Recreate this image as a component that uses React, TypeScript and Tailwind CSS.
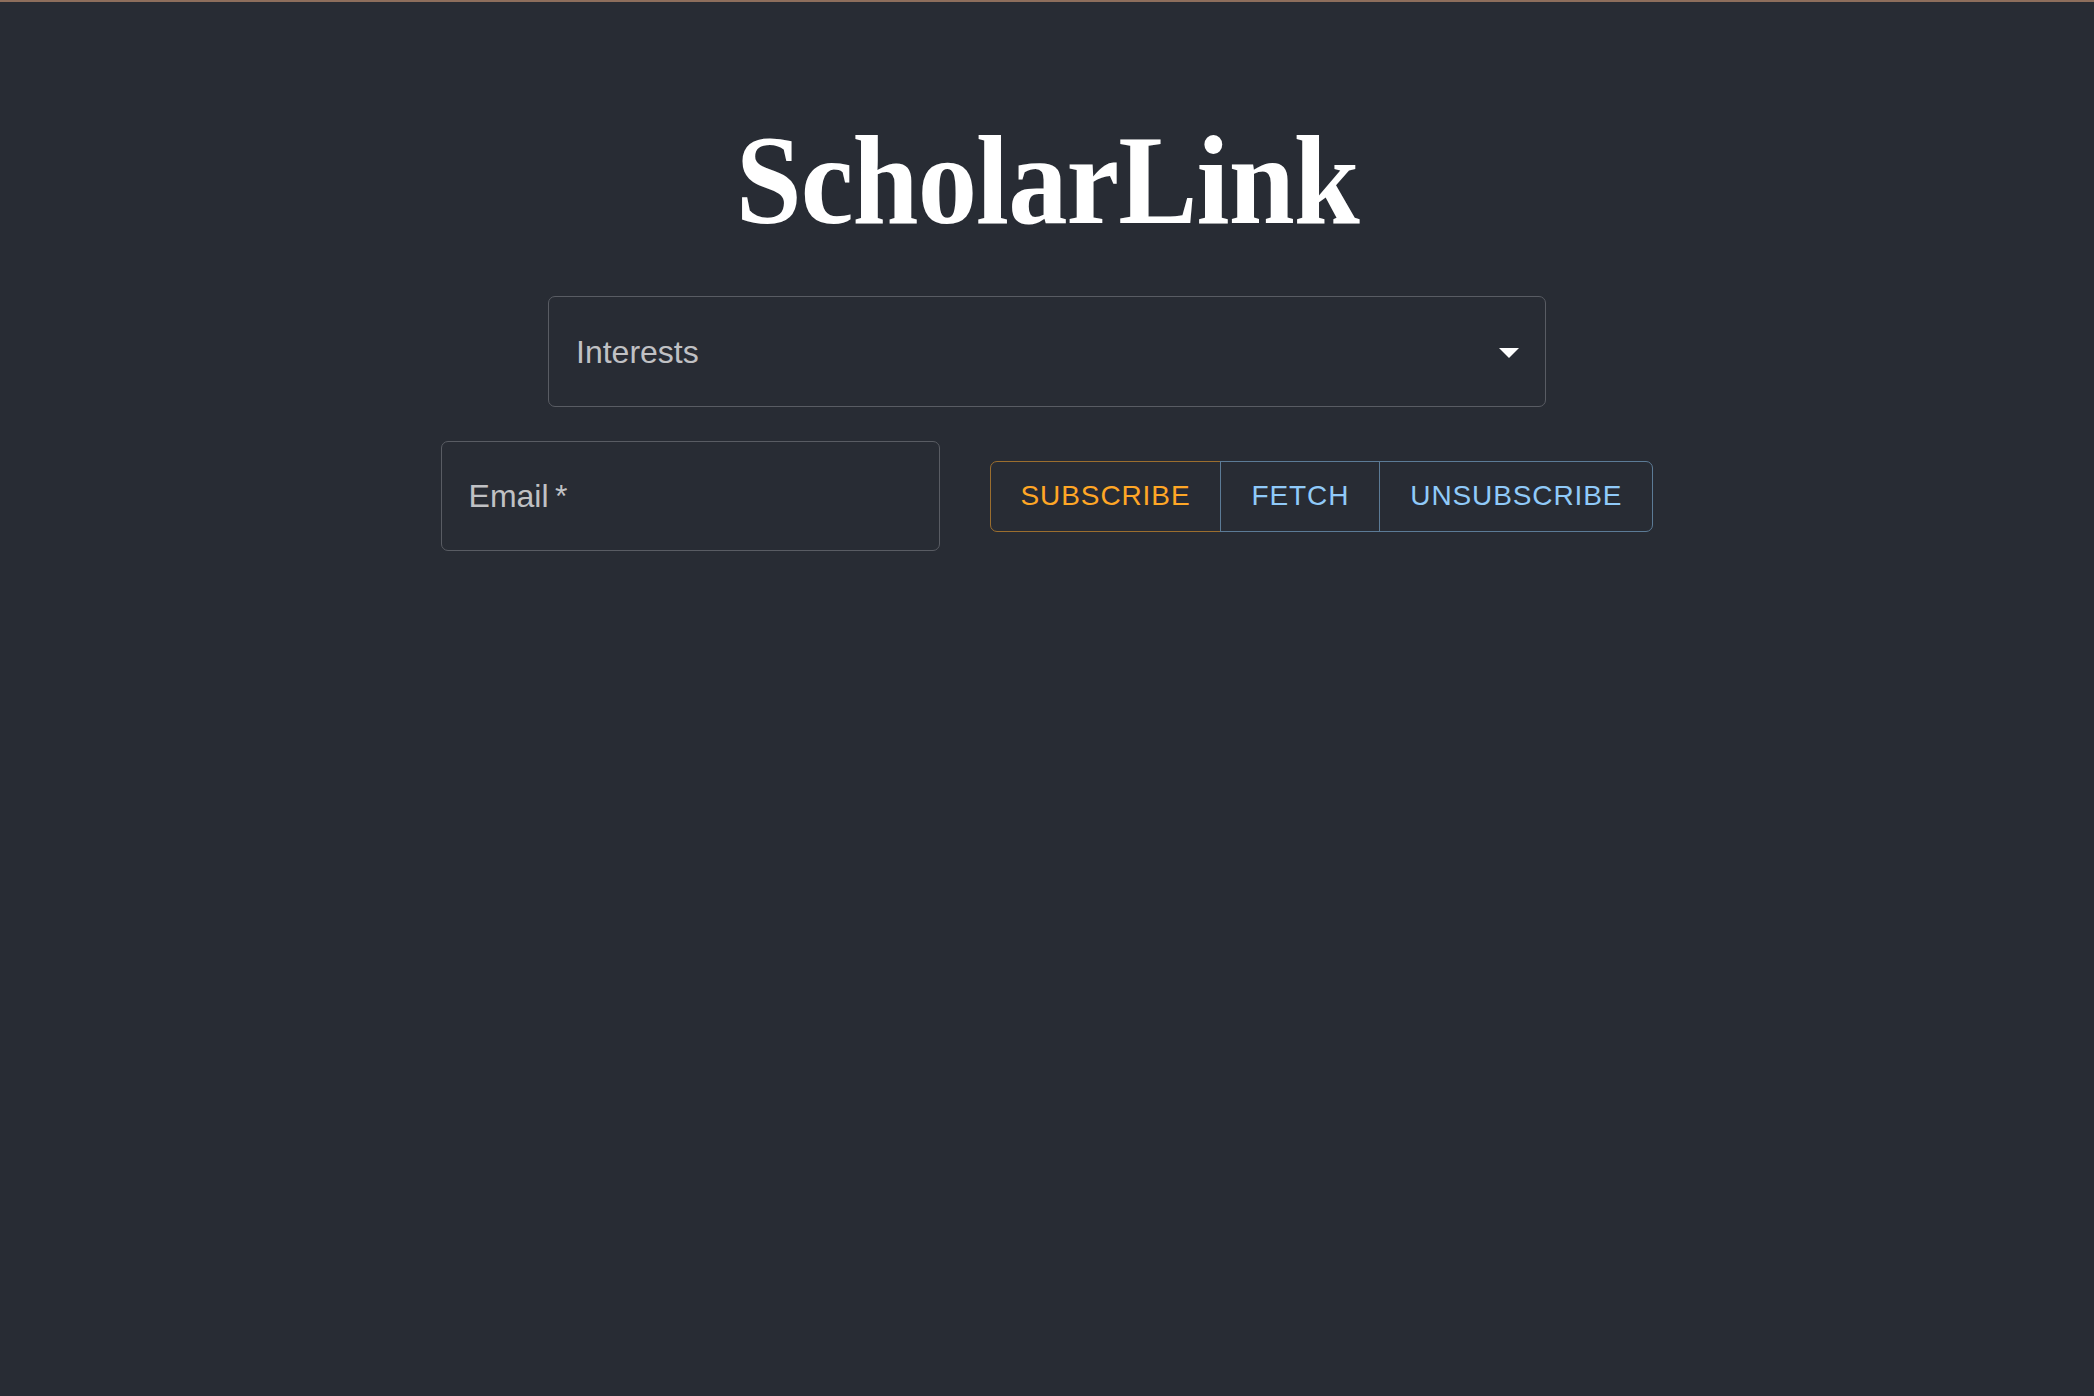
import React from "react";

const actions = [
  { label: "SUBSCRIBE", cls: "text-[#ffa726] border-[#9b6e2e] rounded-l-[7px]" },
  { label: "FETCH", cls: "text-[#90caf9] border-[#5c7b96] -ml-px" },
  { label: "UNSUBSCRIBE", cls: "text-[#90caf9] border-[#5c7b96] -ml-px rounded-r-[7px]" },
];

const App: React.FC = () => {
  return (
    <div className="min-h-screen bg-[#282c34] font-['Liberation_Sans',Arial,sans-serif]">
      <div className="h-[2px] bg-[#8d6e5c]" />

      <div className="flex flex-col items-center">
        <h1 className="mt-[115px] text-[127px] leading-none font-bold text-white font-['Liberation_Serif','Times_New_Roman',serif]">
          <span className="inline-block scale-x-[0.935] tracking-[-1px]">ScholarLink</span>
        </h1>

        {/* interests select */}
        <div className="mt-[52px] w-[998px] h-[111px] flex items-center justify-between pl-[27px] pr-[26px] border border-[#595c63] rounded-[7px]">
          <span className="text-[32px] leading-none text-[#c0c1c4]">Interests</span>
          <svg width="20" height="10" viewBox="0 0 20 10" className="mt-[2px]">
            <polygon points="0,0 20,0 10,10" fill="#ffffff" />
          </svg>
        </div>

        <div className="mt-[34px] flex items-center gap-[50px]">
          <div className="w-[499px] h-[110px] flex items-center pl-[27px] border border-[#595c63] rounded-[7px]">
            <span className="text-[32px] leading-none text-[#c0c1c4]">Email{"\u2009"}*</span>
          </div>

          <div className="flex">
            {actions.map((a) => (
              <button
                key={a.label}
                type="button"
                className={`h-[71px] px-[30px] border flex items-center text-[28px] leading-none tracking-[0.9px] bg-transparent ${a.cls}`}
              >
                {a.label}
              </button>
            ))}
          </div>
        </div>
      </div>
    </div>
  );
};

export default App;
